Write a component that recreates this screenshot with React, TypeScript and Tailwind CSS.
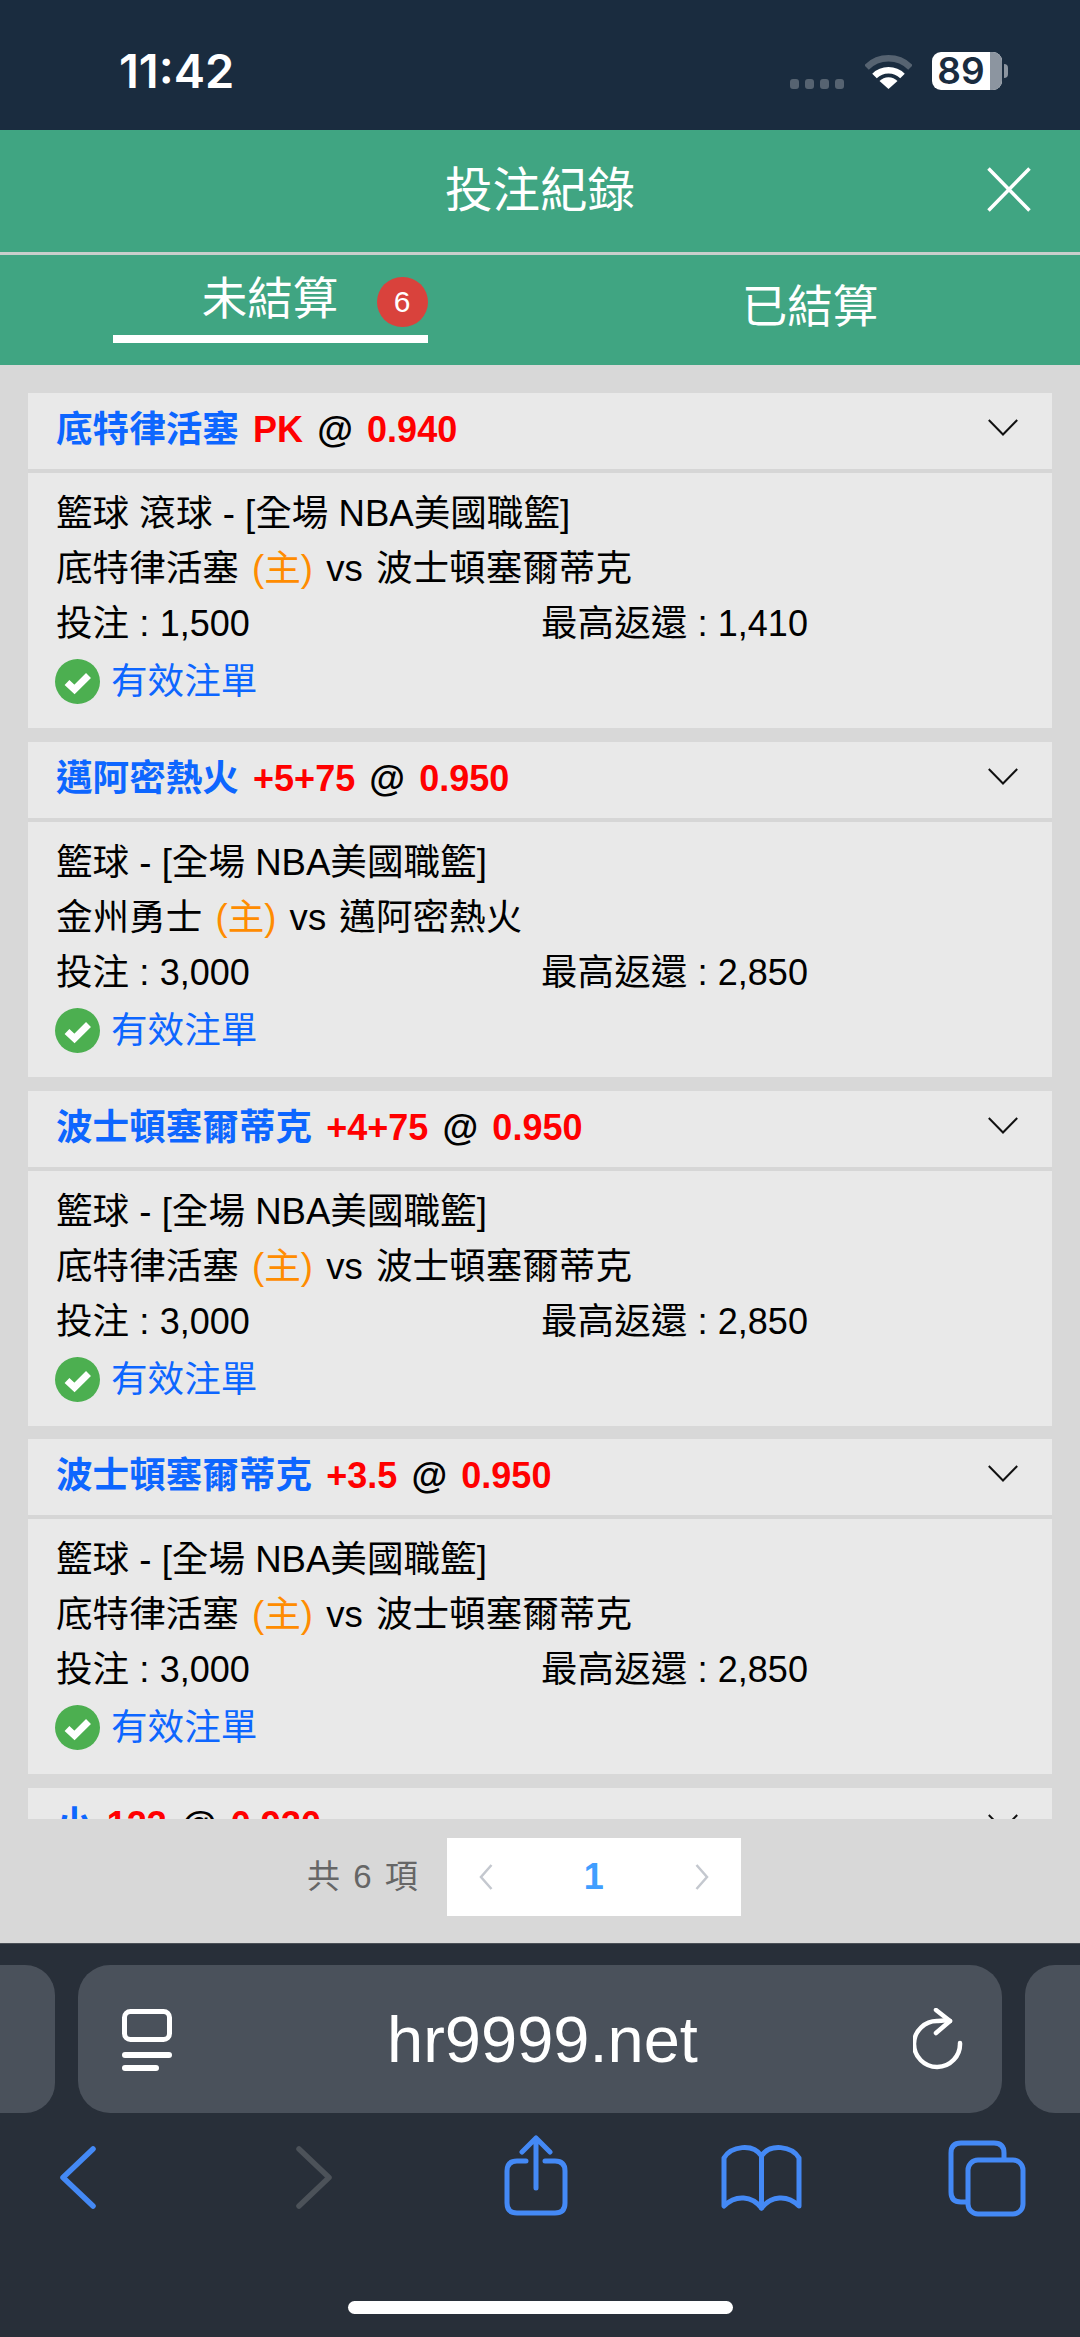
const FONT = "font-['Liberation_Sans','Noto_Sans_CJK_TC',sans-serif]";

type Detail = { league: string; home: string; away: string; stake: string; ret: string };
type Bet = { team: string; odds: string; price: string; detail?: Detail };

const bets: Bet[] = [
  { team: "底特律活塞", odds: "PK", price: "0.940", detail: { league: "籃球 滾球 - [全場 NBA美國職籃]", home: "底特律活塞", away: "波士頓塞爾蒂克", stake: "1,500", ret: "1,410" } },
  { team: "邁阿密熱火", odds: "+5+75", price: "0.950", detail: { league: "籃球 - [全場 NBA美國職籃]", home: "金州勇士", away: "邁阿密熱火", stake: "3,000", ret: "2,850" } },
  { team: "波士頓塞爾蒂克", odds: "+4+75", price: "0.950", detail: { league: "籃球 - [全場 NBA美國職籃]", home: "底特律活塞", away: "波士頓塞爾蒂克", stake: "3,000", ret: "2,850" } },
  { team: "波士頓塞爾蒂克", odds: "+3.5", price: "0.950", detail: { league: "籃球 - [全場 NBA美國職籃]", home: "底特律活塞", away: "波士頓塞爾蒂克", stake: "3,000", ret: "2,850" } },
  { team: "小", odds: "123", price: "0.930" },
];

function Chevron() {
  return (
    <svg width="30" height="17" viewBox="0 0 30 17" fill="none" stroke="#111" strokeWidth="2" className="mt-[26px] shrink-0">
      <path d="M0.8 1 L15 15.5 L29.2 1" />
    </svg>
  );
}

function Check() {
  return (
    <svg width="45" height="45" viewBox="0 0 45 45" className="shrink-0">
      <circle cx="22.5" cy="22.5" r="22.5" fill="#4caf50" />
      <path d="M12 23.5 L19.5 30.5 L33.5 16.5" fill="none" stroke="#fff" strokeWidth="7" />
    </svg>
  );
}

function Card({ b }: { b: Bet }) {
  const d = b.detail;
  return (
    <div className="h-[335px] shrink-0 bg-[#e9e9e9]">
      <div className="flex h-[76px] items-start justify-between pl-[28px] pr-[34px]">
        <div className="whitespace-pre pt-[12px] text-[36.6px] font-bold leading-[50px] text-black [word-spacing:4px]">
          <span className="text-[#0d66ff]">{b.team}</span>{" "}
          <span className="text-[36px] text-[#ff0000]">{b.odds}</span>{" @ "}
          <span className="text-[36px] text-[#ff0000]">{b.price}</span>
        </div>
        <Chevron />
      </div>
      <div className="h-[4px] bg-[#d6d6d6]" />
      {d && (
        <div className="pl-[28px] pt-[13px] text-[36.6px] leading-[55px] text-black">
          <div className="whitespace-pre">{d.league}</div>
          <div className="whitespace-pre [word-spacing:3px]">
            {d.home} <span className="text-[#ff8c00]">(主)</span> vs {d.away}
          </div>
          <div className="flex whitespace-pre">
            <div className="w-[485px]">投注 : <span className="text-[36px]">{d.stake}</span></div>
            <div>最高返還 : <span className="text-[36px]">{d.ret}</span></div>
          </div>
          <div className="-ml-[1px] mt-[3px] flex items-center gap-[11px]">
            <Check />
            <span className="text-[#0d66ff]">有效注單</span>
          </div>
        </div>
      )}
    </div>
  );
}

function StatusBar() {
  return (
    <div className="flex h-[130px] shrink-0 items-start justify-between bg-[#1a2c3f] pl-[119px] pr-[72px]">
      <div className="pt-[45px] font-['Inter',sans-serif] text-[47px] font-semibold leading-[52px] text-white">11:42</div>
      <div className="flex items-start pt-[52px]">
        <div className="mr-[21px] mt-[27px] flex gap-[6px]">
          <div className="h-[10px] w-[9px] rounded-[3px] bg-[#566371]" />
          <div className="h-[10px] w-[9px] rounded-[3px] bg-[#566371]" />
          <div className="h-[10px] w-[9px] rounded-[3px] bg-[#566371]" />
          <div className="h-[10px] w-[9px] rounded-[3px] bg-[#566371]" />
        </div>
        <svg width="47" height="36" viewBox="0 0 47 36" fill="none" className="mr-[20px] mt-[2px]">
          <path d="M1.5 13.5 A31 31 0 0 1 45.5 13.5" stroke="#566371" strokeWidth="6.5" />
          <path d="M9.5 22 A20 20 0 0 1 37.5 22" stroke="#fff" strokeWidth="6.5" />
          <path d="M23.5 35 L14.5 27 A12.5 12.5 0 0 1 32.5 27 Z" fill="#fff" />
        </svg>
        <div className="flex h-[38px] w-[70px] overflow-hidden rounded-[9px] bg-white">
          <div className="w-[58px] text-center font-['Inter',sans-serif] text-[37px] font-semibold leading-[38px] text-[#1a2c3f]">89</div>
          <div className="flex-1 bg-[#8c95a0]" />
        </div>
        <div className="ml-[2px] mt-[12px] h-[14px] w-[4px] rounded-r-[4px] bg-[#8c95a0]" />
      </div>
    </div>
  );
}

function Header() {
  return (
    <div className="shrink-0 bg-[#40a582] text-white">
      <div className="relative flex h-[122px] items-center justify-center">
        <span className="text-[47.5px] leading-[60px]">投注紀錄</span>
        <svg width="44" height="45" viewBox="0 0 44 45" fill="none" stroke="#fff" strokeWidth="3.5" className="absolute left-[987px] top-[37px]">
          <path d="M1.5 1.5 L42.5 43.5 M42.5 1.5 L1.5 43.5" />
        </svg>
      </div>
      <div className="h-[3px] bg-[#c9cfcc]" />
      <div className="grid h-[110px] grid-cols-2">
        <div className="flex justify-center">
          <div className="relative h-[88px] w-[315px] border-b-[8px] border-white pt-[15px] text-center text-[45.5px] leading-[60px]">
            未結算
            <span className="absolute right-0 top-[22px] flex h-[50px] w-[51px] items-center justify-center rounded-full bg-[#d9423c] text-[30px] leading-none">6</span>
          </div>
        </div>
        <div className="pt-[23px] text-center text-[45.5px] leading-[60px]">已結算</div>
      </div>
    </div>
  );
}

function Pagination() {
  return (
    <div className="flex h-[124px] shrink-0 items-start gap-[29px] bg-[#d8d8d8] pl-[307px] pt-[19px]">
      <div className="h-[78px] whitespace-pre text-[33px] leading-[78px] text-[#666] [word-spacing:4px]">共 6 項</div>
      <div className="flex h-[78px] w-[294px] items-center justify-between bg-white pl-[32px] pr-[32px]">
        <svg width="14" height="26" viewBox="0 0 14 26" fill="none" stroke="#c4c8cf" strokeWidth="2.5">
          <path d="M12.5 1 L2 13 L12.5 25" />
        </svg>
        <span className="text-[36px] font-bold leading-none text-[#409eff]">1</span>
        <svg width="14" height="26" viewBox="0 0 14 26" fill="none" stroke="#c4c8cf" strokeWidth="2.5">
          <path d="M1.5 1 L12 13 L1.5 25" />
        </svg>
      </div>
    </div>
  );
}

function BrowserBar() {
  return (
    <div className="flex-1 border-t border-[#4a4f56] bg-[#282f39]">
      <div className="flex h-[169px] gap-[23px] pt-[21px]">
        <div className="w-[55px] rounded-r-[30px] bg-[#4a515b]" />
        <div className="grid w-[924px] grid-cols-[1fr_auto_1fr] items-center rounded-[32px] bg-[#4a515b] pl-[44px] pr-[39px]">
          <svg width="50" height="62" viewBox="0 0 50 62" fill="none" stroke="#fff" strokeLinecap="round" className="mt-[2px]">
            <rect x="2.5" y="2.5" width="45" height="28" rx="6" strokeWidth="5" />
            <path d="M3 46 H47" strokeWidth="6" />
            <path d="M3 59 H34" strokeWidth="6" />
          </svg>
          <span className="text-[65px] leading-none text-white">hr9999.net</span>
          <svg width="50" height="62" viewBox="0 0 50 62" fill="none" stroke="#fff" strokeWidth="4.5" strokeLinecap="round" strokeLinejoin="round" className="justify-self-end">
            <path d="M47 35 A23 23 0 1 1 25 13 Q31 12 37 13" />
            <path d="M23 2 L37 13 L23 25" />
          </svg>
        </div>
        <div className="w-[55px] rounded-l-[30px] bg-[#4a515b]" />
      </div>
      <div className="flex h-[188px] items-start">
        <svg width="36" height="63" viewBox="0 0 36 63" fill="none" stroke="#4489f5" strokeWidth="5.5" strokeLinecap="round" strokeLinejoin="round" className="ml-[60px] mt-[33px]">
          <path d="M33 3 L3 31.5 L33 60" />
        </svg>
        <svg width="36" height="63" viewBox="0 0 36 63" fill="none" stroke="#4c5259" strokeWidth="5.5" strokeLinecap="round" strokeLinejoin="round" className="ml-[200px] mt-[33px]">
          <path d="M3 3 L33 31.5 L3 60" />
        </svg>
        <svg width="64" height="82" viewBox="0 0 64 82" fill="none" stroke="#4489f5" strokeWidth="5" strokeLinecap="round" strokeLinejoin="round" className="ml-[172px] mt-[22px]">
          <path d="M22 26 H13 Q3 26 3 36 V68 Q3 78 13 78 H51 Q61 78 61 68 V36 Q61 26 51 26 H41" />
          <path d="M32 53 V3 M18 17 L32 3 L46 17" />
        </svg>
        <svg width="81" height="67" viewBox="0 0 81 67" fill="none" stroke="#4489f5" strokeWidth="5" strokeLinecap="round" strokeLinejoin="round" className="ml-[153px] mt-[31px]">
          <path d="M3 62 V14 C10 2 32 -1 40.5 12 C49 -1 71 2 78 14 V62 C66 50 50 52 40.5 64 C31 52 15 50 3 62 Z" />
          <path d="M40.5 12 V64" />
        </svg>
        <svg width="78" height="77" viewBox="0 0 78 77" fill="none" stroke="#4489f5" strokeWidth="5" className="ml-[146px] mt-[27px]">
          <path d="M20 62 H13 Q3 62 3 52 V13 Q3 3 13 3 H46 Q56 3 56 13 V20" />
          <rect x="20" y="20" width="55" height="54" rx="10" />
        </svg>
      </div>
      <div className="ml-[348px] h-[13px] w-[385px] rounded-full bg-white" />
    </div>
  );
}

export default function App() {
  return (
    <div className={`flex h-[2337px] w-[1080px] flex-col overflow-hidden bg-[#d8d8d8] ${FONT}`}>
      <StatusBar />
      <Header />
      <div className="flex h-[1454px] shrink-0 flex-col gap-[13.75px] overflow-hidden bg-[#d8d8d8] px-[28px] pt-[28px]">
        {bets.map((b, i) => (
          <Card key={i} b={b} />
        ))}
      </div>
      <Pagination />
      <BrowserBar />
    </div>
  );
}
